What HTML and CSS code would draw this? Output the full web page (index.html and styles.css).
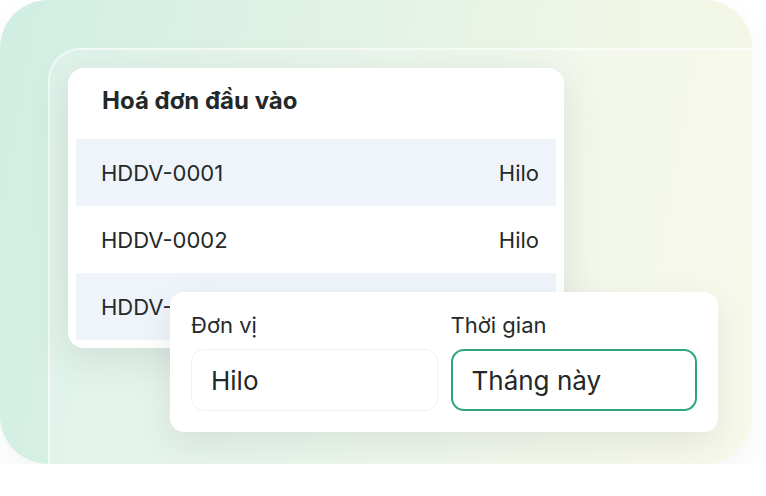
FILE: index.html
```html
<!DOCTYPE html>
<html lang="vi">
<head>
<meta charset="utf-8">
<title>Hoá đơn đầu vào</title>
<link rel="stylesheet" href="styles.css">
</head>
<body>
  <div class="scene">
    <div class="frame">
      <section class="list-card">
        <h2 class="list-title">Hoá đơn đầu vào</h2>
        <div class="row row-alt"><span>HDDV-0001</span><span>Hilo</span></div>
        <div class="row"><span>HDDV-0002</span><span>Hilo</span></div>
        <div class="row row-alt"><span>HDDV-0003</span><span>Hilo</span></div>
      </section>

      <section class="filter-card">
        <div class="field">
          <label class="field-label">Đơn vị</label>
          <div class="input">Hilo</div>
        </div>
        <div class="field">
          <label class="field-label">Thời gian</label>
          <div class="input input-active">Tháng này</div>
        </div>
      </section>
    </div>
  </div>
</body>
</html>
```

FILE: styles.css
```css
* { box-sizing: border-box; }

html, body {
  margin: 0;
  padding: 0;
  background: #ffffff;
}

body {
  font-family: "Inter", "Noto Sans", sans-serif;
  color: #232828;
}

/* big tinted backdrop */
.scene {
  width: 752px;
  height: 464px;
  border-radius: 48px;
  overflow: hidden;
  padding: 48px 0 0 48px;
  background: linear-gradient(100deg, #d0eee2 0%, #e1f2e6 40%, #f0f6e6 75%, #f5f7e5 100%);
  box-shadow: 0 12px 28px rgba(40, 60, 50, 0.05);
}

/* translucent glass frame behind the cards */
.frame {
  position: relative;
  height: 100%;
  border-top-left-radius: 32px;
  border-top: 2px solid rgba(255, 255, 255, 0.6);
  border-left: 2px solid rgba(255, 255, 255, 0.6);
  background: rgba(255, 255, 255, 0.26);
  padding: 18px;
}

.list-card {
  width: 496px;
  height: 280px;
  padding: 8px;
  background: #ffffff;
  border-radius: 16px;
  box-shadow: 0 10px 40px rgba(60, 80, 70, 0.13);
}

.list-title {
  margin: 0;
  padding: 9px 0 22px 26px;
  font-size: 24px;
  line-height: 32px;
  font-weight: 700;
  color: #232828;
}

.row {
  height: 67px;
  display: flex;
  align-items: center;
  justify-content: space-between;
  padding: 0 17px 0 25px;
  font-size: 22px;
  color: #242929;
}

.row-alt {
  background: #eff4fa;
}

/* filter panel laid over the list */
.filter-card {
  position: absolute;
  left: 120px;
  top: 242px;
  width: 548px;
  height: 140px;
  padding: 21px;
  display: grid;
  grid-template-columns: 1fr 1fr;
  column-gap: 13px;
  background: #ffffff;
  border-radius: 14px;
  box-shadow: 0 12px 34px rgba(60, 80, 70, 0.11);
}

.field {
  display: flex;
  flex-direction: column;
}

.field-label {
  font-size: 22px;
  line-height: 24px;
  margin-bottom: 12px;
  color: #252a2a;
}

.input {
  height: 62px;
  display: flex;
  align-items: center;
  padding: 0 19px;
  border: 1.5px solid #ecf1f4;
  border-radius: 13px;
  font-size: 26px;
  color: #232828;
}

.input-active {
  border: 2px solid #2fa57e;
}
```
